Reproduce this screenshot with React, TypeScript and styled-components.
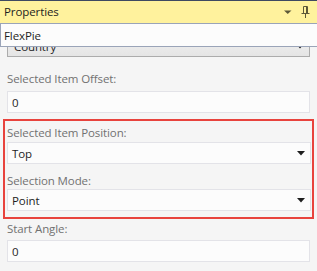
import React from "react";
import styled, { createGlobalStyle } from "styled-components";

const Global = createGlobalStyle`
  html, body { margin: 0; padding: 0; background: #f5f5f5; }
  * { box-sizing: border-box; }
`;

const Panel = styled.div`
  width: 317px;
  height: 271px;
  overflow: hidden;
  display: flex;
  flex-direction: column;
  background: #f5f5f5;
  font-family: "Open Sans", "Noto Sans", sans-serif;
  font-size: 11.5px;
  letter-spacing: -0.1px;
  color: #1e1e1e;
  border-top: 1px solid #3f4a61;
`;

const TitleBar = styled.div`
  height: 22px;
  flex: none;
  display: flex;
  align-items: center;
  background: #fff29d;
  padding: 0 7px 0 4px;
  gap: 9px;
`;

const Title = styled.span`
  flex: 1;
  line-height: 22px;
  color: #1e1e1e;
`;

const Header = styled.div`
  height: 24px;
  flex: none;
  display: flex;
  align-items: center;
  padding-left: 3px;
  background: #fcfcfc;
  border: 1px solid #9aa4b8;
  border-right: none;
  position: relative;
  z-index: 1;
`;

const Scroll = styled.div`
  flex: 1;
  overflow: hidden;
`;

const Content = styled.div`
  margin-top: -12px;
  padding: 0 7px;
  display: flex;
  flex-direction: column;
`;

const Combo = styled.div`
  height: 22px;
  display: flex;
  align-items: center;
  padding: 0 5px 0 6px;
  border: 1px solid #acacac;
  background: linear-gradient(#f0f0f0, #e5e5e5);
`;

const Value = styled.span`
  flex: 1;
  color: #1e1e1e;
`;

const Label = styled.div<{ $gap: number }>`
  line-height: 16px;
  color: #717171;
  margin-bottom: ${(p) => p.$gap}px;
`;

const Field = styled.div`
  height: 22px;
  display: flex;
  align-items: center;
  padding: 0 5px 0 4px;
  border: 1px solid #e3e3e8;
  background: #fcfcfc;
`;

const Item = styled.div<{ $top: number }>`
  display: flex;
  flex-direction: column;
  margin-top: ${(p) => p.$top}px;
`;

const Group = styled.div`
  margin: 6px -4px 0 -4px;
  padding: 2px 1px 6px 2px;
  border: 2px solid #e8433d;
  display: flex;
  flex-direction: column;
`;

const Arrow = () => (
  <svg width="8" height="5" viewBox="0 0 8 5">
    <path d="M0 0H8L4 4.5Z" fill="#1e1e1e" />
  </svg>
);

const DropGlyph = () => (
  <svg width="8" height="5" viewBox="0 0 8 5">
    <path d="M0 0.5H7.5L3.75 4Z" fill="#5c5838" />
  </svg>
);

const PinGlyph = () => (
  <svg width="9" height="12" viewBox="0 0 9 12">
    <path d="M2.5 0.5H6.5V7.5M2.5 0.5V7.5" stroke="#5c5838" fill="none" />
    <path d="M5.5 1V7" stroke="#5c5838" />
    <path d="M0.5 7.5H8.5" stroke="#5c5838" />
    <path d="M4.5 8V12" stroke="#5c5838" />
  </svg>
);

export default function App() {
  return (
    <>
      <Global />
      <Panel>
        <TitleBar>
          <Title>Properties</Title>
          <DropGlyph />
          <PinGlyph />
        </TitleBar>
        <Header>FlexPie</Header>
        <Scroll>
          <Content>
            <Combo>
              <Value>Country</Value>
              <Arrow />
            </Combo>
            <Item $top={14}>
              <Label $gap={4}>Selected Item Offset:</Label>
              <Field>
                <Value>0</Value>
              </Field>
            </Item>
            <Group>
              <Item $top={2}>
                <Label $gap={1}>Selected Item Position:</Label>
                <Field>
                  <Value>Top</Value>
                  <Arrow />
                </Field>
              </Item>
              <Item $top={9}>
                <Label $gap={0}>Selection Mode:</Label>
                <Field>
                  <Value>Point</Value>
                  <Arrow />
                </Field>
              </Item>
            </Group>
            <Item $top={2}>
              <Label $gap={3}>Start Angle:</Label>
              <Field>
                <Value>0</Value>
              </Field>
            </Item>
          </Content>
        </Scroll>
      </Panel>
    </>
  );
}
